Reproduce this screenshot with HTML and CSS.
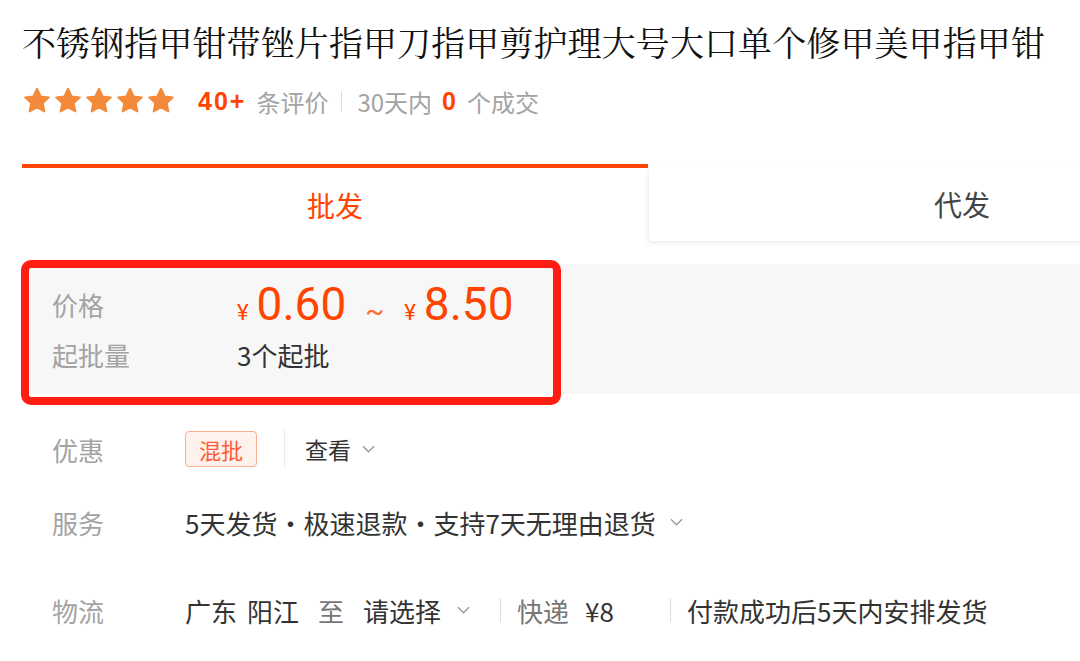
FILE: index.html
```html
<!DOCTYPE html>
<html lang="zh-CN">
<head>
    <meta charset="UTF-8">
    <meta name="viewport" content="width=device-width, initial-scale=1.0">
    <title>不锈钢指甲钳 - 商品详情</title>
    <link rel="stylesheet" href="styles.css">
</head>
<body>
    <main class="page">
        <h1 class="title">不锈钢指甲钳带锉片指甲刀指甲剪护理大号大口单个修甲美甲指甲钳</h1>

        <!-- Rating summary -->
        <div class="rating">
            <div class="stars">
                <svg class="star" viewBox="0 0 24 24"><path d="M12 2.2l2.9 6.1 6.6.8-4.9 4.6 1.3 6.6L12 17.1l-5.9 3.2 1.3-6.6-4.9-4.6 6.6-.8z"/></svg>
                <svg class="star" viewBox="0 0 24 24"><path d="M12 2.2l2.9 6.1 6.6.8-4.9 4.6 1.3 6.6L12 17.1l-5.9 3.2 1.3-6.6-4.9-4.6 6.6-.8z"/></svg>
                <svg class="star" viewBox="0 0 24 24"><path d="M12 2.2l2.9 6.1 6.6.8-4.9 4.6 1.3 6.6L12 17.1l-5.9 3.2 1.3-6.6-4.9-4.6 6.6-.8z"/></svg>
                <svg class="star" viewBox="0 0 24 24"><path d="M12 2.2l2.9 6.1 6.6.8-4.9 4.6 1.3 6.6L12 17.1l-5.9 3.2 1.3-6.6-4.9-4.6 6.6-.8z"/></svg>
                <svg class="star" viewBox="0 0 24 24"><path d="M12 2.2l2.9 6.1 6.6.8-4.9 4.6 1.3 6.6L12 17.1l-5.9 3.2 1.3-6.6-4.9-4.6 6.6-.8z"/></svg>
            </div>
            <span class="count count-first">40+</span>
            <span class="muted">条评价</span>
            <span class="divider"></span>
            <span class="muted">30天内</span>
            <span class="count">0</span>
            <span class="muted">个成交</span>
        </div>

        <!-- Tabs -->
        <div class="tabs">
            <div class="tab active">批发</div>
            <div class="tab">代发</div>
        </div>

        <!-- Price block -->
        <div class="price-box">
            <div class="price-row">
                <span class="price-label">价格</span>
                <span class="price">
                    <span class="yen">¥</span><span class="amount">0.60</span>
                    <span class="tilde">~</span>
                    <span class="yen">¥</span><span class="amount">8.50</span>
                </span>
            </div>
            <div class="price-row small">
                <span class="price-label">起批量</span>
                <span class="value">3个起批</span>
            </div>
            <div class="highlight"></div>
        </div>

        <!-- Info rows -->
        <div class="info-row row-discount">
            <span class="label">优惠</span>
            <span class="tag">混批</span>
            <span class="tag-divider"></span>
            <span class="value view">查看</span>
            <svg class="chevron" viewBox="0 0 14 8"><polyline points="1,1 7,7 13,1"/></svg>
        </div>

        <div class="info-row row-service">
            <span class="label">服务</span>
            <span class="value">5天发货・极速退款・支持7天无理由退货</span>
            <svg class="chevron chevron-wide" viewBox="0 0 14 8"><polyline points="1,1 7,7 13,1"/></svg>
        </div>

        <div class="info-row row-logistics">
            <span class="label">物流</span>
            <span class="value">广东</span>
            <span class="value gap-s">阳江</span>
            <span class="value gray gap-m">至</span>
            <span class="value gap-m">请选择</span>
            <svg class="chevron chevron-ship" viewBox="0 0 14 8"><polyline points="1,1 7,7 13,1"/></svg>
            <span class="line-sep sep-a"></span>
            <span class="value gray">快递</span>
            <span class="value fee">¥8</span>
            <span class="line-sep sep-b"></span>
            <span class="value">付款成功后5天内安排发货</span>
        </div>
    </main>
</body>
</html>
```

FILE: styles.css
```css
* {
    margin: 0;
    padding: 0;
    box-sizing: border-box;
}

body {
    background: #ffffff;
    font-family: "Noto Sans CJK SC", "Noto Sans", sans-serif;
    color: #333;
    overflow: hidden;
}

.page {
    padding-left: 22px;
    width: 1080px;
}

.title {
    margin-top: 20px;
    font-family: "Noto Serif CJK SC", "Noto Sans CJK SC", serif;
    font-size: 34px;
    line-height: 44px;
    font-weight: 400;
    letter-spacing: 0.1px;
    color: #111;
    white-space: nowrap;
}

/* rating */
.rating {
    display: flex;
    align-items: center;
    height: 30px;
    margin-top: 22px;
    font-size: 24px;
}

.stars {
    display: flex;
    gap: 1px;
}

.star {
    width: 30px;
    height: 30px;
    fill: #f38a3b;
    stroke: #f38a3b;
    stroke-width: 1.6;
    stroke-linejoin: round;
}

.count {
    color: #ff4400;
    font-family: "Liberation Sans", sans-serif;
    font-weight: 700;
    font-size: 25px;
    letter-spacing: 1px;
    margin: 0 10px 0 10px;
}

.count-first {
    margin-left: 22px;
    letter-spacing: 2px;
}

.muted {
    color: #a3a3a3;
}

.divider {
    width: 1px;
    height: 20px;
    background: #ddd;
    margin: 0 15px 0 13px;
}

/* tabs */
.tabs {
    display: flex;
    width: 1253px;
    margin-top: 48px;
}

.tab {
    flex: 1;
    height: 77px;
    display: flex;
    align-items: center;
    justify-content: center;
    font-size: 28px;
    color: #444;
    background: #fff;
}

.tab.active {
    border-top: 4px solid #ff4400;
    color: #ff4400;
}

.tab:not(.active) {
    margin-top: 3px;
    height: 74px;
    margin-left: 1px;
    border-radius: 4px 0 0 4px;
    box-shadow: -1px 2px 5px rgba(0, 0, 0, 0.09);
}

/* price block */
.price-box {
    position: relative;
    margin-top: 23px;
    height: 130px;
    padding: 14px 0 0 30px;
    background: #f7f7f7;
}

.price-row {
    display: flex;
    align-items: center;
    height: 52px;
}

.price-row.small {
    height: 40px;
    margin-top: 4px;
}

.price-label {
    width: 185px;
    font-size: 26px;
    color: #a3a3a3;
}

.price {
    display: flex;
    align-items: baseline;
    color: #ff4400;
    font-family: Roboto, "Liberation Sans", sans-serif;
}

.yen {
    font-size: 22px;
    margin-right: 8px;
}

.amount {
    font-size: 46px;
    line-height: 52px;
}

.tilde {
    font-size: 28px;
    margin: 0 20px 0 19px;
    color: #ff6a2e;
}

.price-row .value {
    font-size: 26px;
    color: #333;
}

.highlight {
    position: absolute;
    left: -1px;
    top: -4px;
    width: 540px;
    height: 145px;
    border: 8px solid #ff1d12;
    border-radius: 10px;
}

/* info rows */
.info-row {
    display: flex;
    align-items: center;
    height: 40px;
    padding-left: 30px;
    font-size: 26px;
}

.label {
    width: 133px;
    flex-shrink: 0;
    color: #a3a3a3;
}

.row-discount {
    margin-top: 35px;
}

.row-service {
    margin-top: 33px;
}

.row-logistics {
    margin-top: 48px;
}

.value {
    color: #333;
    white-space: nowrap;
}

.gray {
    color: #777;
}

.tag {
    height: 36px;
    padding: 0 13px;
    display: flex;
    align-items: center;
    border: 1px solid #ffad90;
    border-radius: 4px;
    background: #fff1ec;
    color: #ff5a36;
    font-size: 22px;
}

.tag-divider {
    width: 1px;
    height: 38px;
    background: #f4e6e6;
    margin: 0 20px 0 27px;
}

.view {
    font-size: 23px;
}

.chevron {
    width: 13px;
    height: 8px;
    margin-left: 11px;
    fill: none;
    stroke: #9a9a9a;
    stroke-width: 1.5;
}

.chevron-wide {
    margin-left: 14px;
}

.gap-s {
    margin-left: 10px;
}

.gap-m {
    margin-left: 19px;
}

.chevron-ship {
    margin-left: 16px;
}

.line-sep {
    width: 1px;
    height: 24px;
    background: #ddd;
}

.sep-a {
    margin: 0 16px 0 30px;
}

.fee {
    margin-left: 16px;
}

.sep-b {
    margin: 0 16px 0 56px;
}
```
